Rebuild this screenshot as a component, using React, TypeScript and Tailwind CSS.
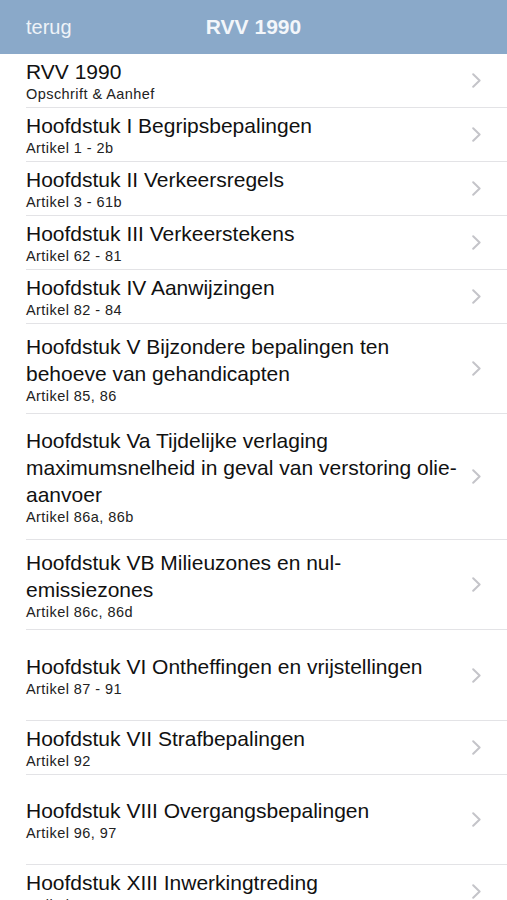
import React from 'react'

type Item = { title: string; sub: string; h: string }

const items: Item[] = [
  { title: 'RVV 1990', sub: 'Opschrift & Aanhef', h: 'h-[54px]' },
  { title: 'Hoofdstuk I Begripsbepalingen', sub: 'Artikel 1 - 2b', h: 'h-[54px]' },
  { title: 'Hoofdstuk II Verkeersregels', sub: 'Artikel 3 - 61b', h: 'h-[54px]' },
  { title: 'Hoofdstuk III Verkeerstekens', sub: 'Artikel 62 - 81', h: 'h-[54px]' },
  { title: 'Hoofdstuk IV Aanwijzingen', sub: 'Artikel 82 - 84', h: 'h-[54px]' },
  { title: 'Hoofdstuk V Bijzondere bepalingen ten behoeve van gehandicapten', sub: 'Artikel 85, 86', h: 'h-[90px]' },
  { title: 'Hoofdstuk Va Tijdelijke verlaging maximumsnelheid in geval van verstoring olie-aanvoer', sub: 'Artikel 86a, 86b', h: 'h-[126px]' },
  { title: 'Hoofdstuk VB Milieuzones en nul-emissiezones', sub: 'Artikel 86c, 86d', h: 'h-[90px]' },
  { title: 'Hoofdstuk VI Ontheffingen en vrijstellingen', sub: 'Artikel 87 - 91', h: 'h-[91px]' },
  { title: 'Hoofdstuk VII Strafbepalingen', sub: 'Artikel 92', h: 'h-[54px]' },
  { title: 'Hoofdstuk VIII Overgangsbepalingen', sub: 'Artikel 96, 97', h: 'h-[90px]' },
  { title: 'Hoofdstuk XIII Inwerkingtreding', sub: 'Artikel 98', h: 'h-[54px]' },
]

function Chevron() {
  return (
    <svg width="9" height="15" viewBox="0 0 9 15" className="shrink-0">
      <path d="M1.2 1.2 L7.6 7.5 L1.2 13.8" fill="none" stroke="#c4c4c9" strokeWidth="2" strokeLinecap="round" strokeLinejoin="round" />
    </svg>
  )
}

export default function App() {
  return (
    <div className="w-[507px] h-[900px] overflow-hidden bg-white font-['Liberation_Sans',Arial,sans-serif]">
      {/* Nav bar */}
      <div className="h-[54px] bg-[#8aa9c9] flex items-center relative">
        <span className="pl-[26px] text-[20px] text-[#eef3f8]">terug</span>
        <span className="absolute left-0 right-0 text-center text-[21px] font-bold text-[#f3f6fa] pointer-events-none">RVV 1990</span>
      </div>

      {/* List */}
      <div className="flex flex-col">
        {items.map((it, i) => (
          <div key={i} className={`${it.h} pl-[26px] flex shrink-0`}>
            <div className="flex-1 flex items-center border-b border-[#e3e3e6] pr-[26px]">
              <div className="flex-1 pr-[14px]">
                <div className="text-[21px] leading-[27px] text-[#111111]">{it.title}</div>
                <div className="text-[14.5px] leading-[18px] tracking-[0.03em] text-[#222222]">{it.sub}</div>
              </div>
              <Chevron />
            </div>
          </div>
        ))}
      </div>
    </div>
  )
}
